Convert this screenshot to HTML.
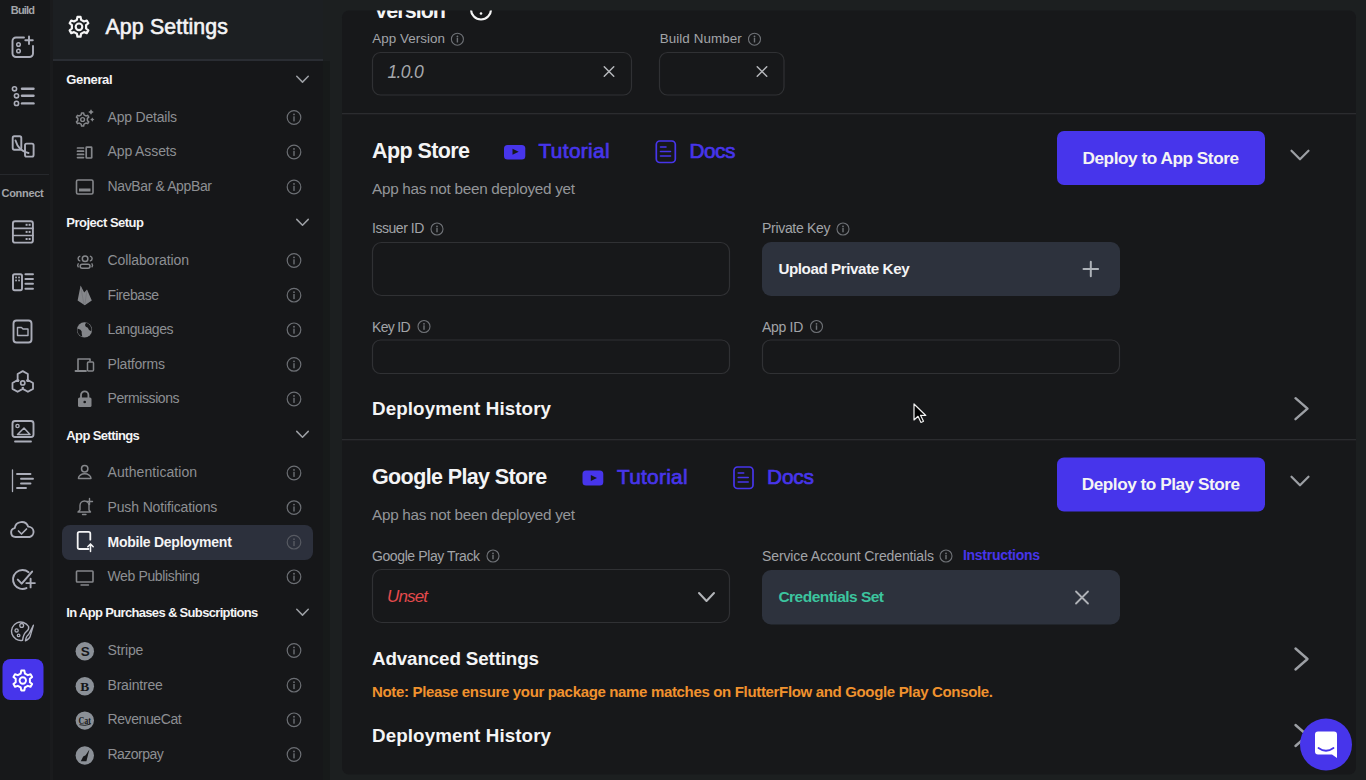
<!DOCTYPE html>
<html><head><meta charset="utf-8"><title>App Settings</title>
<style>html,body{margin:0;padding:0;background:#1c1f20;width:1366px;height:780px;overflow:hidden}
svg{display:block;font-family:"Liberation Sans", sans-serif}</style></head>
<body><svg width="1366" height="780" viewBox="0 0 1366 780">
<rect x="0" y="0" width="1366" height="780" rx="0" fill="#1c1f20"/>
<rect x="0" y="0" width="50" height="780" rx="0" fill="#17181a"/>
<rect x="50" y="0" width="3" height="780" rx="0" fill="#1a1b1d"/>
<rect x="53" y="0" width="270" height="59" rx="0" fill="#1c1f22"/>
<rect x="53" y="59" width="270" height="2" rx="0" fill="#2a2d33"/>
<rect x="53" y="61" width="270" height="719" rx="0" fill="#161719"/>
<rect x="323" y="61" width="7" height="719" rx="0" fill="#171a1a"/>
<rect x="342" y="10.5" width="1014" height="764" rx="7" fill="#17181a"/>
<text x="10.8" y="14" font-size="11" font-weight="700" fill="#a3a5a9" textLength="24.2" lengthAdjust="spacing">Build</text>
<rect x="0" y="174" width="49" height="1" rx="0" fill="#26282c"/>
<text x="1.5" y="197" font-size="11" font-weight="700" fill="#a3a5a9" textLength="42.2" lengthAdjust="spacing">Connect</text>
<path d="M24,37.5 H16 a3.5,3.5 0 0 0 -3.5,3.5 V53.5 a3.5,3.5 0 0 0 3.5,3.5 H29.5 a3.5,3.5 0 0 0 3.5,-3.5 V46" fill="none" stroke="#abadb9" stroke-width="1.9" stroke-linecap="round" stroke-linejoin="round" />
<circle cx="18.5" cy="44.5" r="1.8" fill="none" stroke="#abadb9" stroke-width="1.5"/>
<circle cx="18.5" cy="51" r="1.8" fill="none" stroke="#abadb9" stroke-width="1.5"/>
<path d="M29,36.5 V44 M25.3,40.2 H32.8" fill="none" stroke="#abadb9" stroke-width="1.9" stroke-linecap="round" stroke-linejoin="round" />
<circle cx="14.5" cy="88.8" r="2.1" fill="none" stroke="#abadb9" stroke-width="1.6"/>
<path d="M22,88.8 H33.5" fill="none" stroke="#abadb9" stroke-width="2.4" stroke-linecap="round" stroke-linejoin="round" />
<circle cx="16.5" cy="95.8" r="2.1" fill="none" stroke="#abadb9" stroke-width="1.6"/>
<path d="M22,95.8 H33.5" fill="none" stroke="#abadb9" stroke-width="2.4" stroke-linecap="round" stroke-linejoin="round" />
<circle cx="16.5" cy="103.4" r="2.1" fill="none" stroke="#abadb9" stroke-width="1.6"/>
<path d="M22,103.4 H33.5" fill="none" stroke="#abadb9" stroke-width="2.4" stroke-linecap="round" stroke-linejoin="round" />
<rect x="12.7" y="136.3" width="8.6" height="13.4" rx="1.6" fill="none" stroke="#abadb9" stroke-width="1.9"/>
<rect x="25" y="143.6" width="8.6" height="13" rx="1.6" fill="none" stroke="#abadb9" stroke-width="1.9"/>
<path d="M15.5,140.5 Q18.5,151 28.5,153" fill="none" stroke="#abadb9" stroke-width="1.9" stroke-linecap="round" stroke-linejoin="round" />
<rect x="12.9" y="221.2" width="20" height="21.4" rx="2.2" fill="none" stroke="#abadb9" stroke-width="1.9"/>
<path d="M12.9,228.3 H32.9 M12.9,235.5 H32.9" fill="none" stroke="#abadb9" stroke-width="1.7" stroke-linecap="round" stroke-linejoin="round" />
<rect x="25.6" y="223.8" width="2" height="2" rx="0" fill="#abadb9"/>
<rect x="28.6" y="223.8" width="2" height="2" rx="0" fill="#abadb9"/>
<rect x="25.6" y="230.9" width="2" height="2" rx="0" fill="#abadb9"/>
<rect x="28.6" y="230.9" width="2" height="2" rx="0" fill="#abadb9"/>
<rect x="25.6" y="238.0" width="2" height="2" rx="0" fill="#abadb9"/>
<rect x="28.6" y="238.0" width="2" height="2" rx="0" fill="#abadb9"/>
<rect x="13" y="274.2" width="9" height="16" rx="1.6" fill="none" stroke="#abadb9" stroke-width="1.9"/>
<rect x="15.2" y="276.6" width="1.7" height="1.7" rx="0" fill="#abadb9"/>
<rect x="18.2" y="276.6" width="1.7" height="1.7" rx="0" fill="#abadb9"/>
<rect x="15.2" y="279.6" width="1.7" height="1.7" rx="0" fill="#abadb9"/>
<rect x="18.2" y="279.6" width="1.7" height="1.7" rx="0" fill="#abadb9"/>
<path d="M25.4,274.2 H33" fill="none" stroke="#abadb9" stroke-width="1.9" stroke-linecap="round" stroke-linejoin="round" />
<path d="M25.4,279 H33" fill="none" stroke="#abadb9" stroke-width="1.9" stroke-linecap="round" stroke-linejoin="round" />
<path d="M25.4,283.8 H33" fill="none" stroke="#abadb9" stroke-width="1.9" stroke-linecap="round" stroke-linejoin="round" />
<path d="M25.4,288.8 H33" fill="none" stroke="#abadb9" stroke-width="1.9" stroke-linecap="round" stroke-linejoin="round" />
<rect x="13.5" y="320.5" width="18" height="22" rx="3" fill="none" stroke="#abadb9" stroke-width="1.9"/>
<path d="M17.5,327.5 h4 l1.5,1.5 h5 v6.5 h-10.5 z" fill="none" stroke="#abadb9" stroke-width="1.4" stroke-linecap="round" stroke-linejoin="round" />
<path d="M22.75,382.90 L17.64,379.95 L17.64,374.05 L22.75,371.10 L27.86,374.05 L27.86,379.95Z" fill="none" stroke="#abadb9" stroke-width="1.8" stroke-linecap="round" stroke-linejoin="round" />
<path d="M17.60,391.80 L12.49,388.85 L12.49,382.95 L17.60,380.00 L22.71,382.95 L22.71,388.85Z" fill="none" stroke="#abadb9" stroke-width="1.8" stroke-linecap="round" stroke-linejoin="round" />
<path d="M27.90,391.80 L22.79,388.85 L22.79,382.95 L27.90,380.00 L33.01,382.95 L33.01,388.85Z" fill="none" stroke="#abadb9" stroke-width="1.8" stroke-linecap="round" stroke-linejoin="round" />
<circle cx="22.75" cy="382.9" r="4.0" fill="#17181a"/>
<circle cx="22.75" cy="382.9" r="2.1" fill="none" stroke="#abadb9" stroke-width="1.7"/>
<rect x="12.5" y="421" width="21" height="16" rx="2.5" fill="none" stroke="#abadb9" stroke-width="1.9"/>
<circle cx="17.5" cy="426" r="1.6" fill="none" stroke="#abadb9" stroke-width="1.4"/>
<path d="M17.5,434.5 L24,428 L30,434.5 Z" fill="none" stroke="#abadb9" stroke-width="1.5" stroke-linecap="round" stroke-linejoin="round" />
<path d="M15,441.5 H31" fill="none" stroke="#abadb9" stroke-width="1.8" stroke-linecap="round" stroke-linejoin="round" />
<path d="M12.5,470 V491.5" fill="none" stroke="#abadb9" stroke-width="1.3" stroke-linecap="round" stroke-linejoin="round" />
<path d="M17,474 H30.5" fill="none" stroke="#abadb9" stroke-width="1.9" stroke-linecap="round" stroke-linejoin="round" />
<path d="M21,478.8 H33" fill="none" stroke="#abadb9" stroke-width="1.9" stroke-linecap="round" stroke-linejoin="round" />
<path d="M21,483.5 H30.5" fill="none" stroke="#abadb9" stroke-width="1.9" stroke-linecap="round" stroke-linejoin="round" />
<path d="M17,488 H26" fill="none" stroke="#abadb9" stroke-width="1.9" stroke-linecap="round" stroke-linejoin="round" />
<path d="M15.5,537 a4.5,4.5 0 0 1 -0.8,-8.9 a7,7 0 0 1 13.5,-1.5 a5.3,5.3 0 0 1 1.5,10.4 z" fill="none" stroke="#abadb9" stroke-width="1.9" stroke-linecap="round" stroke-linejoin="round" />
<path d="M18.5,531 l3,3 l5,-5" fill="none" stroke="#abadb9" stroke-width="1.7" stroke-linecap="round" stroke-linejoin="round" />
<path d="M28.6,572.2 A9.5,9.5 0 1 0 26.5,588.1" fill="none" stroke="#abadb9" stroke-width="1.9" stroke-linecap="round" stroke-linejoin="round" />
<path d="M17.8,579.6 l3.9,4 l10.4,-12" fill="none" stroke="#abadb9" stroke-width="2.0" stroke-linecap="round" stroke-linejoin="round" />
<path d="M30.6,578.8 v8.6 M26.3,583.1 h8.6" fill="none" stroke="#abadb9" stroke-width="1.9" stroke-linecap="round" stroke-linejoin="round" />
<path d="M22.5,640.3 A9.2,9.2 0 1 1 28.6,626.5 Q29.2,629.8 26.6,631.4 Q23.6,633.4 22.5,640.3 Z" fill="none" stroke="#abadb9" stroke-width="1.4" stroke-linecap="round" stroke-linejoin="round" />
<circle cx="21.7" cy="625.4" r="1.9" fill="none" stroke="#abadb9" stroke-width="1.3"/>
<circle cx="16.6" cy="630.4" r="1.6" fill="none" stroke="#abadb9" stroke-width="1.3"/>
<circle cx="18.6" cy="635.4" r="1.3" fill="none" stroke="#abadb9" stroke-width="1.3"/>
<path d="M33.4,625.2 L28.6,634.6 Q26.2,636 25.4,640.8 Q29.4,639 30.2,636.2 L33.4,625.2 Z" fill="none" stroke="#abadb9" stroke-width="1.3" stroke-linecap="round" stroke-linejoin="round" />
<rect x="2.5" y="659" width="41" height="41" rx="8" fill="#4735eb"/>
<path d="M20.69,673.51 L21.24,670.62 L24.36,670.62 L24.91,673.51 L27.80,675.18 L30.57,674.21 L32.14,676.92 L29.91,678.83 L29.91,682.17 L32.14,684.08 L30.57,686.79 L27.80,685.82 L24.91,687.49 L24.36,690.38 L21.24,690.38 L20.69,687.49 L17.80,685.82 L15.03,686.79 L13.46,684.08 L15.69,682.17 L15.69,678.83 L13.46,676.92 L15.03,674.21 L17.80,675.18Z" fill="none" stroke="#fff" stroke-width="2.0" stroke-linecap="round" stroke-linejoin="round" />
<circle cx="22.8" cy="680.5" r="3.2" fill="none" stroke="#fff" stroke-width="1.9"/>
<path d="M76.89,19.81 L77.44,16.92 L80.56,16.92 L81.11,19.81 L84.00,21.48 L86.77,20.51 L88.34,23.22 L86.11,25.13 L86.11,28.47 L88.34,30.38 L86.77,33.09 L84.00,32.12 L81.11,33.79 L80.56,36.68 L77.44,36.68 L76.89,33.79 L74.00,32.12 L71.23,33.09 L69.66,30.38 L71.89,28.47 L71.89,25.13 L69.66,23.22 L71.23,20.51 L74.00,21.48Z" fill="none" stroke="#f4f4f5" stroke-width="2.2" stroke-linecap="round" stroke-linejoin="round" />
<circle cx="79" cy="26.8" r="3.3" fill="none" stroke="#f4f4f5" stroke-width="2.1"/>
<text x="105.5" y="34.3" font-size="21.3" fill="#f4f4f5" stroke="#f4f4f5" stroke-width="0.6" textLength="122.5" lengthAdjust="spacing">App Settings</text>
<text x="66.3" y="84.2" font-size="13.0" font-weight="700" fill="#f4f4f5" textLength="46.3" lengthAdjust="spacing">General</text>
<path d="M296.75,76.3 L302.5,82.10000000000001 L308.25,76.3" fill="none" stroke="#9c9fa4" stroke-width="1.5" stroke-linecap="round" stroke-linejoin="round" />
<text x="107.5" y="121.8" font-size="14" font-weight="400" fill="#8d8f93" textLength="69.6" lengthAdjust="spacing">App Details</text>
<circle cx="294" cy="117.5" r="6.8" fill="none" stroke="#6c6f74" stroke-width="1.2"/>
<rect x="293.3" y="116.3" width="1.4" height="5.1" rx="0" fill="#6c6f74"/>
<circle cx="294" cy="114.44" r="0.9" fill="#6c6f74"/>
<text x="107.5" y="156.3" font-size="14" font-weight="400" fill="#8d8f93" textLength="69.1" lengthAdjust="spacing">App Assets</text>
<circle cx="294" cy="152" r="6.8" fill="none" stroke="#6c6f74" stroke-width="1.2"/>
<rect x="293.3" y="150.8" width="1.4" height="5.1" rx="0" fill="#6c6f74"/>
<circle cx="294" cy="148.94" r="0.9" fill="#6c6f74"/>
<text x="107.5" y="191.3" font-size="14" font-weight="400" fill="#8d8f93" textLength="104.5" lengthAdjust="spacing">NavBar &amp; AppBar</text>
<circle cx="294" cy="187" r="6.8" fill="none" stroke="#6c6f74" stroke-width="1.2"/>
<rect x="293.3" y="185.8" width="1.4" height="5.1" rx="0" fill="#6c6f74"/>
<circle cx="294" cy="183.94" r="0.9" fill="#6c6f74"/>
<text x="66.3" y="227.4" font-size="13.0" font-weight="700" fill="#f4f4f5" textLength="77.7" lengthAdjust="spacing">Project Setup</text>
<path d="M296.75,219.4 L302.5,225.20000000000002 L308.25,219.4" fill="none" stroke="#9c9fa4" stroke-width="1.5" stroke-linecap="round" stroke-linejoin="round" />
<text x="107.5" y="264.8" font-size="14" font-weight="400" fill="#8d8f93" textLength="81.5" lengthAdjust="spacing">Collaboration</text>
<circle cx="294" cy="260.5" r="6.8" fill="none" stroke="#6c6f74" stroke-width="1.2"/>
<rect x="293.3" y="259.3" width="1.4" height="5.1" rx="0" fill="#6c6f74"/>
<circle cx="294" cy="257.44" r="0.9" fill="#6c6f74"/>
<text x="107.5" y="299.5" font-size="14" font-weight="400" fill="#8d8f93" textLength="51.5" lengthAdjust="spacing">Firebase</text>
<circle cx="294" cy="295.2" r="6.8" fill="none" stroke="#6c6f74" stroke-width="1.2"/>
<rect x="293.3" y="294.0" width="1.4" height="5.1" rx="0" fill="#6c6f74"/>
<circle cx="294" cy="292.14" r="0.9" fill="#6c6f74"/>
<text x="107.5" y="334.1" font-size="14" font-weight="400" fill="#8d8f93" textLength="66" lengthAdjust="spacing">Languages</text>
<circle cx="294" cy="329.8" r="6.8" fill="none" stroke="#6c6f74" stroke-width="1.2"/>
<rect x="293.3" y="328.6" width="1.4" height="5.1" rx="0" fill="#6c6f74"/>
<circle cx="294" cy="326.74" r="0.9" fill="#6c6f74"/>
<text x="107.5" y="368.7" font-size="14" font-weight="400" fill="#8d8f93" textLength="57.5" lengthAdjust="spacing">Platforms</text>
<circle cx="294" cy="364.4" r="6.8" fill="none" stroke="#6c6f74" stroke-width="1.2"/>
<rect x="293.3" y="363.2" width="1.4" height="5.1" rx="0" fill="#6c6f74"/>
<circle cx="294" cy="361.34" r="0.9" fill="#6c6f74"/>
<text x="66.3" y="439.8" font-size="13.0" font-weight="700" fill="#f4f4f5" textLength="73.5" lengthAdjust="spacing">App Settings</text>
<path d="M296.75,431.40000000000003 L302.5,437.2 L308.25,431.40000000000003" fill="none" stroke="#9c9fa4" stroke-width="1.5" stroke-linecap="round" stroke-linejoin="round" />
<rect x="62" y="525" width="251" height="35" rx="8" fill="#2c303c"/>
<text x="107.5" y="477.3" font-size="14" font-weight="400" fill="#8d8f93" textLength="89.6" lengthAdjust="spacing">Authentication</text>
<circle cx="294" cy="473" r="6.8" fill="none" stroke="#6c6f74" stroke-width="1.2"/>
<rect x="293.3" y="471.8" width="1.4" height="5.1" rx="0" fill="#6c6f74"/>
<circle cx="294" cy="469.94" r="0.9" fill="#6c6f74"/>
<text x="107.5" y="511.90000000000003" font-size="14" font-weight="400" fill="#8d8f93" textLength="109.8" lengthAdjust="spacing">Push Notifications</text>
<circle cx="294" cy="507.6" r="6.8" fill="none" stroke="#6c6f74" stroke-width="1.2"/>
<rect x="293.3" y="506.40000000000003" width="1.4" height="5.1" rx="0" fill="#6c6f74"/>
<circle cx="294" cy="504.54" r="0.9" fill="#6c6f74"/>
<text x="107.5" y="546.5" font-size="14" font-weight="700" fill="#f4f4f5" textLength="124.3" lengthAdjust="spacing">Mobile Deployment</text>
<circle cx="294" cy="542.2" r="6.8" fill="none" stroke="#575a62" stroke-width="1.2"/>
<rect x="293.3" y="541.0" width="1.4" height="5.1" rx="0" fill="#575a62"/>
<circle cx="294" cy="539.1400000000001" r="0.9" fill="#575a62"/>
<text x="107.5" y="581.0999999999999" font-size="14" font-weight="400" fill="#8d8f93" textLength="92.3" lengthAdjust="spacing">Web Publishing</text>
<circle cx="294" cy="576.8" r="6.8" fill="none" stroke="#6c6f74" stroke-width="1.2"/>
<rect x="293.3" y="575.5999999999999" width="1.4" height="5.1" rx="0" fill="#6c6f74"/>
<circle cx="294" cy="573.74" r="0.9" fill="#6c6f74"/>
<text x="107.5" y="403.3" font-size="14" font-weight="400" fill="#8d8f93" textLength="72.1" lengthAdjust="spacing">Permissions</text>
<circle cx="294" cy="399" r="6.8" fill="none" stroke="#6c6f74" stroke-width="1.2"/>
<rect x="293.3" y="397.8" width="1.4" height="5.1" rx="0" fill="#6c6f74"/>
<circle cx="294" cy="395.94" r="0.9" fill="#6c6f74"/>
<text x="66.3" y="616.9" font-size="13.0" font-weight="700" fill="#f4f4f5" textLength="192" lengthAdjust="spacing">In App Purchases &amp; Subscriptions</text>
<path d="M296.75,609.3000000000001 L302.5,615.1 L308.25,609.3000000000001" fill="none" stroke="#9c9fa4" stroke-width="1.5" stroke-linecap="round" stroke-linejoin="round" />
<text x="107.5" y="654.8" font-size="14" font-weight="400" fill="#8d8f93" textLength="35.9" lengthAdjust="spacing">Stripe</text>
<circle cx="294" cy="650.5" r="6.8" fill="none" stroke="#6c6f74" stroke-width="1.2"/>
<rect x="293.3" y="649.3" width="1.4" height="5.1" rx="0" fill="#6c6f74"/>
<circle cx="294" cy="647.44" r="0.9" fill="#6c6f74"/>
<text x="107.5" y="689.5" font-size="14" font-weight="400" fill="#8d8f93" textLength="55.3" lengthAdjust="spacing">Braintree</text>
<circle cx="294" cy="685.2" r="6.8" fill="none" stroke="#6c6f74" stroke-width="1.2"/>
<rect x="293.3" y="684.0" width="1.4" height="5.1" rx="0" fill="#6c6f74"/>
<circle cx="294" cy="682.1400000000001" r="0.9" fill="#6c6f74"/>
<text x="107.5" y="724.0999999999999" font-size="14" font-weight="400" fill="#8d8f93" textLength="74.2" lengthAdjust="spacing">RevenueCat</text>
<circle cx="294" cy="719.8" r="6.8" fill="none" stroke="#6c6f74" stroke-width="1.2"/>
<rect x="293.3" y="718.5999999999999" width="1.4" height="5.1" rx="0" fill="#6c6f74"/>
<circle cx="294" cy="716.74" r="0.9" fill="#6c6f74"/>
<text x="107.5" y="758.8" font-size="14" font-weight="400" fill="#8d8f93" textLength="56.3" lengthAdjust="spacing">Razorpay</text>
<circle cx="294" cy="754.5" r="6.8" fill="none" stroke="#6c6f74" stroke-width="1.2"/>
<rect x="293.3" y="753.3" width="1.4" height="5.1" rx="0" fill="#6c6f74"/>
<circle cx="294" cy="751.44" r="0.9" fill="#6c6f74"/>
<path d="M81.18,114.81 L81.57,112.98 L83.63,112.98 L84.02,114.81 L85.95,115.93 L87.73,115.35 L88.76,117.13 L87.37,118.38 L87.37,120.62 L88.76,121.87 L87.73,123.65 L85.95,123.07 L84.02,124.19 L83.63,126.02 L81.57,126.02 L81.18,124.19 L79.25,123.07 L77.47,123.65 L76.44,121.87 L77.83,120.62 L77.83,118.38 L76.44,117.13 L77.47,115.35 L79.25,115.93Z" fill="none" stroke="#85878b" stroke-width="1.5" stroke-linecap="round" stroke-linejoin="round" />
<circle cx="82.6" cy="119.5" r="1.9" fill="none" stroke="#85878b" stroke-width="1.4"/>
<path d="M91,109.2 Q91.784,111.216 93.8,112 Q91.784,112.784 91,114.8 Q90.216,112.784 88.2,112 Q90.216,111.216 91,109.2 Z" fill="#85878b" />
<path d="M92.3,117.5 Q92.88799999999999,119.012 94.39999999999999,119.6 Q92.88799999999999,120.18799999999999 92.3,121.69999999999999 Q91.712,120.18799999999999 90.2,119.6 Q91.712,119.012 92.3,117.5 Z" fill="#85878b" />
<path d="M77.5,148 H83.5" fill="none" stroke="#85878b" stroke-width="1.7" stroke-linecap="round" stroke-linejoin="round" />
<path d="M77.5,151.2 H83.5" fill="none" stroke="#85878b" stroke-width="1.7" stroke-linecap="round" stroke-linejoin="round" />
<path d="M77.5,154.4 H83.5" fill="none" stroke="#85878b" stroke-width="1.7" stroke-linecap="round" stroke-linejoin="round" />
<path d="M77.5,157.6 H83.5" fill="none" stroke="#85878b" stroke-width="1.7" stroke-linecap="round" stroke-linejoin="round" />
<rect x="86.2" y="147.2" width="5.5" height="10.8" rx="0.6" fill="none" stroke="#85878b" stroke-width="1.7"/>
<rect x="76.5" y="180" width="16.5" height="14" rx="1.5" fill="none" stroke="#85878b" stroke-width="1.6"/>
<rect x="79" y="188.5" width="11.5" height="3" rx="0" fill="#85878b"/>
<circle cx="85.1" cy="258.7" r="2.8" fill="none" stroke="#85878b" stroke-width="1.5"/>
<path d="M79.8,256.3 a2.4,2.4 0 0 0 0,4.6 M90.4,256.3 a2.4,2.4 0 0 1 0,4.6" fill="none" stroke="#85878b" stroke-width="1.4" stroke-linecap="round" stroke-linejoin="round" />
<rect x="80.2" y="264.3" width="9.8" height="4" rx="2" fill="none" stroke="#85878b" stroke-width="1.5"/>
<path d="M78.2,263.8 a2.5,2.5 0 0 0 0,3 M92,263.8 a2.5,2.5 0 0 1 0,3" fill="none" stroke="#85878b" stroke-width="1.4" stroke-linecap="round" stroke-linejoin="round" />
<path d="M77.6,300.5 L80.6,285.6 L84.2,292.6 L87,289.6 L91.8,300.5 L84.8,305.3 Z" fill="#85878b" />
<path d="M80.8,287 L83.8,303.5 M86.8,291 L85,303.8" fill="none" stroke="#6f7175" stroke-width="0.6" stroke-linecap="round" stroke-linejoin="round" />
<circle cx="84.5" cy="329.8" r="7.6" fill="#85878b"/>
<path d="M86,322.8 q-1.8,2.2 -0.2,4 q2.5,0.6 3.2,3.2 l2.3,1.2 a7,7 0 0 0 -5.3,-8.4 z" fill="#161719" />
<path d="M77.5,328.5 l3,1.2 q1.8,1.8 1.2,3.8 l0.6,3.2 a7,7 0 0 1 -4.8,-8.2 z" fill="#161719" />
<path d="M78,371 V359 H90 V361" fill="none" stroke="#85878b" stroke-width="1.6" stroke-linecap="round" stroke-linejoin="round" />
<path d="M75.5,371 H86" fill="none" stroke="#85878b" stroke-width="1.8" stroke-linecap="round" stroke-linejoin="round" />
<rect x="87.5" y="362" width="6" height="9" rx="1" fill="none" stroke="#85878b" stroke-width="1.5"/>
<path d="M81,398 v-3 a3.7,3.7 0 0 1 7.4,0 v3" fill="none" stroke="#85878b" stroke-width="1.8" stroke-linecap="round" stroke-linejoin="round" />
<rect x="78" y="397.5" width="13.5" height="9.5" rx="1.5" fill="#85878b"/>
<circle cx="84.7" cy="402" r="1.3" fill="#161719"/>
<circle cx="84.7" cy="468.7" r="3.2" fill="none" stroke="#85878b" stroke-width="1.5"/>
<path d="M78.5,478.5 v-0.5 a6.2,4.2 0 0 1 12.4,0 v0.5 z" fill="none" stroke="#85878b" stroke-width="1.5" stroke-linecap="round" stroke-linejoin="round" />
<path d="M78,512 h12.5 l-1.5,-2 v-4.5 a4.5,4.5 0 0 0 -4.5,-4.5 a4.5,4.5 0 0 0 -4.5,4.5 v4.5 z" fill="none" stroke="#85878b" stroke-width="1.4" stroke-linecap="round" stroke-linejoin="round" />
<path d="M82.5,514.5 h3.5" fill="none" stroke="#85878b" stroke-width="1.3" stroke-linecap="round" stroke-linejoin="round" />
<path d="M89.5,498.5 v6 M86.5,501.5 h6" fill="none" stroke="#85878b" stroke-width="1.4" stroke-linecap="round" stroke-linejoin="round" />
<path d="M88.5,549 h-9 a1.8,1.8 0 0 1 -1.8,-1.8 v-13.5 a1.8,1.8 0 0 1 1.8,-1.8 h9 a1.8,1.8 0 0 1 1.8,1.8 v6" fill="none" stroke="#f4f4f5" stroke-width="1.8" stroke-linecap="round" stroke-linejoin="round" />
<path d="M90.5,551.5 v-7.5 M87.8,546.8 l2.7,-2.8 l2.7,2.8" fill="none" stroke="#f4f4f5" stroke-width="1.5" stroke-linecap="round" stroke-linejoin="round" />
<rect x="76.5" y="571" width="16.5" height="11" rx="0.8" fill="none" stroke="#85878b" stroke-width="1.6"/>
<path d="M81,585 h7.5" fill="none" stroke="#85878b" stroke-width="1.4" stroke-linecap="round" stroke-linejoin="round" />
<circle cx="84.8" cy="651.3" r="9.2" fill="#8b9097"/>
<circle cx="84.8" cy="686.2" r="9.2" fill="#8b9097"/>
<circle cx="84.8" cy="720.6" r="9.2" fill="#8b9097"/>
<circle cx="84.8" cy="755.5" r="9.2" fill="#8b9097"/>
<text x="80.8" y="656.3" font-size="13.5" font-weight="700" fill="#161719">S</text>
<text x="80.2" y="691.3" font-size="13.5" font-weight="700" fill="#161719" font-family="Liberation Serif, serif">B</text>
<text x="78.6" y="723.6" font-size="9.5" font-weight="700" fill="#161719" font-family="Liberation Serif, serif" textLength="12.4" lengthAdjust="spacingAndGlyphs">Cat</text>
<path d="M79.8,724.8 q5,1.6 10.4,-0.6" fill="none" stroke="#161719" stroke-width="0.9" stroke-linecap="round" stroke-linejoin="round" />
<path d="M80.8,761.2 L83.2,756.6 L85.6,755.2 L89.4,749.6 L86.4,761.2 Z" fill="#161719" />
<clipPath id="cardclip"><rect x="342" y="10.5" width="1014" height="780"/></clipPath>
<g clip-path="url(#cardclip)">
<text x="374" y="18.2" font-size="21.5" font-weight="700" fill="#f4f4f5" textLength="72" lengthAdjust="spacing">Version</text>
<circle cx="481" cy="9.5" r="10" fill="none" stroke="#f4f4f5" stroke-width="2.2"/>
<circle cx="481" cy="13.5" r="1.3" fill="#f4f4f5"/>
</g>
<text x="372.3" y="43.4" font-size="13.4" font-weight="400" fill="#a2a4a8" textLength="72.7" lengthAdjust="spacing">App Version</text>
<circle cx="457.4" cy="39.2" r="6" fill="none" stroke="#6f7277" stroke-width="1.1"/>
<rect x="456.7" y="38.0" width="1.4" height="4.5" rx="0" fill="#6f7277"/>
<circle cx="457.4" cy="36.5" r="0.9" fill="#6f7277"/>
<text x="659.7" y="43.4" font-size="13.4" font-weight="400" fill="#a2a4a8" textLength="82" lengthAdjust="spacing">Build Number</text>
<circle cx="754.5" cy="39.2" r="6" fill="none" stroke="#6f7277" stroke-width="1.1"/>
<rect x="753.8" y="38.0" width="1.4" height="4.5" rx="0" fill="#6f7277"/>
<circle cx="754.5" cy="36.5" r="0.9" fill="#6f7277"/>
<rect x="372.5" y="52.5" width="259" height="42.5" rx="8" fill="none" stroke="#303134" stroke-width="1.2"/>
<rect x="659.5" y="52.5" width="124.5" height="42.5" rx="8" fill="none" stroke="#303134" stroke-width="1.2"/>
<text x="387.4" y="78" font-size="17.5" font-weight="400" fill="#a5a7ab" font-style="italic" textLength="36.4" lengthAdjust="spacing">1.0.0</text>
<path d="M604.25,66.75 L613.75,76.25 M613.75,66.75 L604.25,76.25" fill="none" stroke="#b5b7bb" stroke-width="1.5" stroke-linecap="round" stroke-linejoin="round" />
<path d="M757.25,66.75 L766.75,76.25 M766.75,66.75 L757.25,76.25" fill="none" stroke="#b5b7bb" stroke-width="1.5" stroke-linecap="round" stroke-linejoin="round" />
<rect x="342" y="113" width="1014" height="1.3" rx="0" fill="#2b2c2f"/>
<text x="372" y="157.5" font-size="21.5" font-weight="700" fill="#f4f4f5" textLength="98" lengthAdjust="spacing">App Store</text>
<rect x="504" y="145" width="21.3" height="14.5" rx="3.5" fill="#4735eb"/>
<path d="M512.5,148.8 L518.7,151.8 L512.5,154.8 Z" fill="#17181a" />
<text x="538.6" y="157.6" font-size="20.8" font-weight="400" fill="#4735eb" stroke="#4735eb" stroke-width="0.7" textLength="71" lengthAdjust="spacing">Tutorial</text>
<rect x="656.3" y="141" width="19" height="21.5" rx="3.5" fill="none" stroke="#4735eb" stroke-width="1.7"/>
<path d="M660.5,147 h5.5 M660.5,151.5 h10 M660.5,156 h10" fill="none" stroke="#4735eb" stroke-width="1.6" stroke-linecap="round" stroke-linejoin="round" />
<text x="689.4" y="157.6" font-size="20.8" font-weight="400" fill="#4735eb" stroke="#4735eb" stroke-width="0.7" textLength="46" lengthAdjust="spacing">Docs</text>
<text x="372" y="193.9" font-size="15.3" font-weight="400" fill="#939599" textLength="203" lengthAdjust="spacing">App has not been deployed yet</text>
<rect x="1057" y="131" width="208" height="54" rx="7" fill="#4735eb"/>
<text x="1082.5" y="164.4" font-size="17.2" font-weight="700" fill="#f4f4f5" textLength="156.5" lengthAdjust="spacing">Deploy to App Store</text>
<path d="M1291.5,150.75 L1300,159.25 L1308.5,150.75" fill="none" stroke="#9c9fa4" stroke-width="2.2" stroke-linecap="round" stroke-linejoin="round" />
<text x="372" y="233.4" font-size="14" font-weight="400" fill="#a2a4a8" textLength="52.4" lengthAdjust="spacing">Issuer ID</text>
<circle cx="437" cy="229" r="6" fill="none" stroke="#6f7277" stroke-width="1.1"/>
<rect x="436.3" y="227.8" width="1.4" height="4.5" rx="0" fill="#6f7277"/>
<circle cx="437" cy="226.3" r="0.9" fill="#6f7277"/>
<text x="762" y="233.4" font-size="14" font-weight="400" fill="#a2a4a8" textLength="68.5" lengthAdjust="spacing">Private Key</text>
<circle cx="843" cy="229" r="6" fill="none" stroke="#6f7277" stroke-width="1.1"/>
<rect x="842.3" y="227.8" width="1.4" height="4.5" rx="0" fill="#6f7277"/>
<circle cx="843" cy="226.3" r="0.9" fill="#6f7277"/>
<rect x="372.5" y="242.5" width="357" height="53" rx="9" fill="none" stroke="#303134" stroke-width="1.2"/>
<rect x="762" y="242" width="358" height="54" rx="9" fill="#2d323d"/>
<text x="778.4" y="274.2" font-size="15.2" font-weight="700" fill="#f4f4f5" textLength="131.2" lengthAdjust="spacing">Upload Private Key</text>
<path d="M1090.8,261.8 v14.5 M1083.5,269 h14.6" fill="none" stroke="#aeb3b9" stroke-width="2" stroke-linecap="round" stroke-linejoin="round" />
<text x="372" y="331.5" font-size="14" font-weight="400" fill="#a2a4a8" textLength="38.7" lengthAdjust="spacing">Key ID</text>
<circle cx="424" cy="326.5" r="6" fill="none" stroke="#6f7277" stroke-width="1.1"/>
<rect x="423.3" y="325.3" width="1.4" height="4.5" rx="0" fill="#6f7277"/>
<circle cx="424" cy="323.8" r="0.9" fill="#6f7277"/>
<text x="762" y="331.5" font-size="14" font-weight="400" fill="#a2a4a8" textLength="41.3" lengthAdjust="spacing">App ID</text>
<circle cx="816.5" cy="326.5" r="6" fill="none" stroke="#6f7277" stroke-width="1.1"/>
<rect x="815.8" y="325.3" width="1.4" height="4.5" rx="0" fill="#6f7277"/>
<circle cx="816.5" cy="323.8" r="0.9" fill="#6f7277"/>
<rect x="372.5" y="340" width="357" height="33.5" rx="8" fill="none" stroke="#303134" stroke-width="1.2"/>
<rect x="762.5" y="340" width="357" height="33.5" rx="8" fill="none" stroke="#303134" stroke-width="1.2"/>
<text x="372" y="414.9" font-size="18.8" font-weight="700" fill="#f4f4f5" textLength="179" lengthAdjust="spacing">Deployment History</text>
<path d="M1295.5,398.2 L1307.5,408.7 L1295.5,419.2" fill="none" stroke="#9c9fa4" stroke-width="2.4" stroke-linecap="round" stroke-linejoin="round" />
<rect x="342" y="439" width="1014" height="1.3" rx="0" fill="#2b2c2f"/>
<text x="372" y="483.5" font-size="21.5" font-weight="700" fill="#f4f4f5" textLength="175.3" lengthAdjust="spacing">Google Play Store</text>
<rect x="582.5" y="470.5" width="20.8" height="15" rx="3.5" fill="#4735eb"/>
<path d="M590.8,475 L597,478 L590.8,481 Z" fill="#17181a" />
<text x="617" y="483.5" font-size="20.8" font-weight="400" fill="#4735eb" stroke="#4735eb" stroke-width="0.7" textLength="70.5" lengthAdjust="spacing">Tutorial</text>
<rect x="734" y="467" width="19" height="21.5" rx="3.5" fill="none" stroke="#4735eb" stroke-width="1.7"/>
<path d="M738.2,473 h5.5 M738.2,477.5 h10 M738.2,482 h10" fill="none" stroke="#4735eb" stroke-width="1.6" stroke-linecap="round" stroke-linejoin="round" />
<text x="767" y="483.5" font-size="20.8" font-weight="400" fill="#4735eb" stroke="#4735eb" stroke-width="0.7" textLength="47" lengthAdjust="spacing">Docs</text>
<text x="372" y="519.5" font-size="15.3" font-weight="400" fill="#939599" textLength="203" lengthAdjust="spacing">App has not been deployed yet</text>
<rect x="1057" y="457.5" width="208" height="54" rx="7" fill="#4735eb"/>
<text x="1081.8" y="490.2" font-size="17.2" font-weight="700" fill="#f4f4f5" textLength="158.2" lengthAdjust="spacing">Deploy to Play Store</text>
<path d="M1291.5,476.75 L1300,485.25 L1308.5,476.75" fill="none" stroke="#9c9fa4" stroke-width="2.2" stroke-linecap="round" stroke-linejoin="round" />
<text x="372" y="560.5" font-size="14" font-weight="400" fill="#a2a4a8" textLength="108" lengthAdjust="spacing">Google Play Track</text>
<circle cx="493" cy="556" r="6" fill="none" stroke="#6f7277" stroke-width="1.1"/>
<rect x="492.3" y="554.8" width="1.4" height="4.5" rx="0" fill="#6f7277"/>
<circle cx="493" cy="553.3" r="0.9" fill="#6f7277"/>
<text x="762" y="561" font-size="14" font-weight="400" fill="#a2a4a8" textLength="172" lengthAdjust="spacing">Service Account Credentials</text>
<circle cx="946" cy="556" r="6" fill="none" stroke="#6f7277" stroke-width="1.1"/>
<rect x="945.3" y="554.8" width="1.4" height="4.5" rx="0" fill="#6f7277"/>
<circle cx="946" cy="553.3" r="0.9" fill="#6f7277"/>
<text x="963" y="560" font-size="14" font-weight="700" fill="#4735eb" textLength="77" lengthAdjust="spacing">Instructions</text>
<rect x="372.5" y="569.5" width="357" height="53" rx="9" fill="none" stroke="#303134" stroke-width="1.2"/>
<text x="387" y="602" font-size="17" font-weight="400" fill="#e44a4c" font-style="italic" textLength="41" lengthAdjust="spacing">Unset</text>
<path d="M699.0,593.0 L706.5,601.0 L714.0,593.0" fill="none" stroke="#b3b5b9" stroke-width="2" stroke-linecap="round" stroke-linejoin="round" />
<rect x="762" y="570" width="358" height="54.5" rx="9" fill="#2d323d"/>
<text x="778.4" y="602.2" font-size="15.5" font-weight="700" fill="#3cc59f" textLength="105.6" lengthAdjust="spacing">Credentials Set</text>
<path d="M1076.0,591.5 L1088.0,603.5 M1088.0,591.5 L1076.0,603.5" fill="none" stroke="#aeb1b6" stroke-width="1.8" stroke-linecap="round" stroke-linejoin="round" />
<text x="372" y="665.1" font-size="18.8" font-weight="700" fill="#f4f4f5" textLength="167" lengthAdjust="spacing">Advanced Settings</text>
<path d="M1295.5,648.5 L1307.5,659 L1295.5,669.5" fill="none" stroke="#9c9fa4" stroke-width="2.4" stroke-linecap="round" stroke-linejoin="round" />
<text x="372" y="697" font-size="15" font-weight="700" fill="#f0922e" textLength="621" lengthAdjust="spacing">Note: Please ensure your package name matches on FlutterFlow and Google Play Console.</text>
<text x="372" y="741.8" font-size="18.8" font-weight="700" fill="#f4f4f5" textLength="179" lengthAdjust="spacing">Deployment History</text>
<path d="M1295.5,725.0 L1307.5,735.5 L1295.5,746.0" fill="none" stroke="#9c9fa4" stroke-width="2.4" stroke-linecap="round" stroke-linejoin="round" />
<path d="M914,404 L914,420 L918,416.3 L921,422.5 L923.5,421.3 L920.5,415.3 L925.8,415.5 Z" fill="#000" stroke="#f0f0f0" stroke-width="1.2" stroke-linecap="round" stroke-linejoin="round" />
<circle cx="1326" cy="744.5" r="26" fill="#4735eb"/>
<path d="M1318,731.5 h16 a3,3 0 0 1 3,3 v23.5 l-5,-3.5 h-14 a3,3 0 0 1 -3,-3 v-17 a3,3 0 0 1 3,-3 z" fill="#fff" />
<path d="M1318.5,748 q7.5,5.5 15,0" fill="none" stroke="#4735eb" stroke-width="1.8" stroke-linecap="round" stroke-linejoin="round" />
</svg></body></html>
